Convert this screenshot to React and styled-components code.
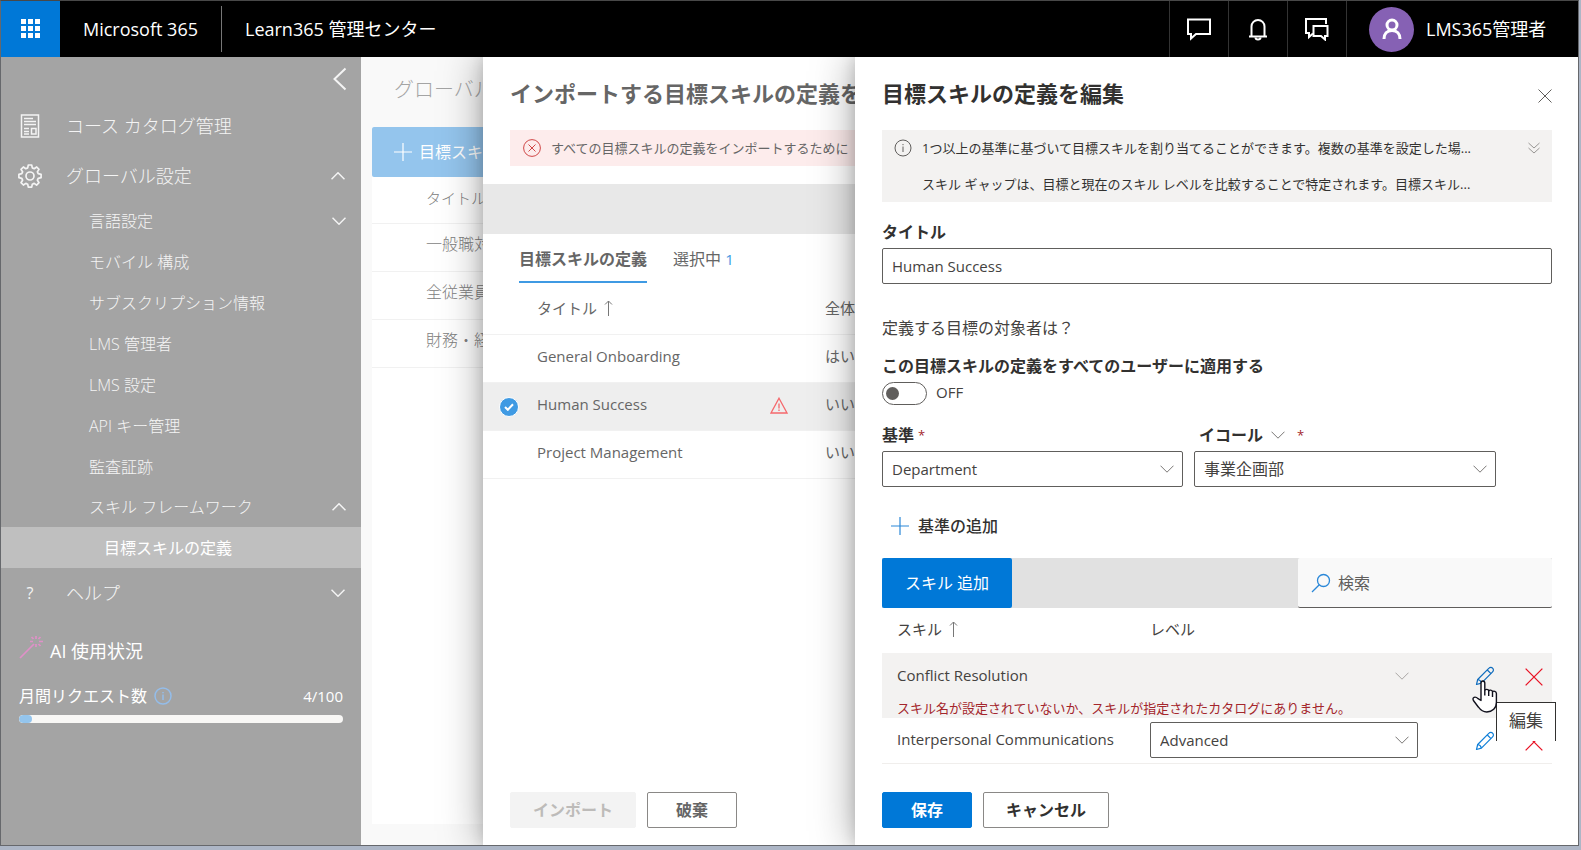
import React from "react";
import styled, { createGlobalStyle, css } from "styled-components";

const Global = createGlobalStyle`
  *, *::before, *::after { box-sizing: border-box; }
  html { background: #adb6c6; }
  body {
    margin: 0;
    font-family: "Open Sans", "Noto Sans CJK JP", sans-serif;
    font-size: 16px;
    font-weight: 400;
    line-height: 20px;
    color: #323130;
  }
  button, input, select { font: inherit; color: inherit; }
  h1, h2, p, ul { margin: 0; padding: 0; }
  ul { list-style: none; }
  table { border-collapse: collapse; border-spacing: 0; table-layout: fixed; width: 100%; }
  th, td { padding: 0; text-align: left; font-weight: inherit; }
`;

/* ---------- icons ---------- */

const Icon = ({ w = 18, h = w, box = `0 0 ${w} ${h}`, sw = 1, children, ...rest }) => (
  <svg width={w} height={h} viewBox={box} fill="none" stroke="currentColor" strokeWidth={sw} aria-hidden="true" {...rest}>
    {children}
  </svg>
);
const Waffle = () => (
  <Icon w={20} fill="#fff" stroke="none">
    {[0, 7, 14].map((y) => [0, 7, 14].map((x) => <rect key={`${x}-${y}`} x={x} y={y} width="5" height="5" />))}
  </Icon>
);
const Chat = () => (
  <Icon w={26} h={24} sw={2}>
    <path d="M2 2.500h22v14.500H10l-5 4.500v-4.500H2z" />
  </Icon>
);
const Bell = () => (
  <Icon w={20} h={24} sw={2}>
    <path d="M1 19.500h18M3.500 19V9.500a6.500 6.500 0 0 1 13 0V19" />
    <path d="M7.500 20.500a2.500 2 0 0 0 5 0" />
  </Icon>
);
const Chats = () => (
  <Icon w={26} h={24} sw={2}>
    <path d="M22 7V2H2v14h3v4l4-3.500" />
    <path d="M9.500 9h14v10h-2.500v3.500L17 19H9.500z" />
  </Icon>
);
const Person = () => (
  <Icon w={20} h={22} sw={3}>
    <circle cx="10" cy="7" r="5" />
    <path d="M2 21c0-5 3-8.500 8-8.500s8 3.500 8 8.500" />
  </Icon>
);
const Back = () => (
  <Icon w={14} h={24} sw={2}>
    <path d="M12.500 1.500L1.500 12l11 10.500" />
  </Icon>
);
const Catalog = () => (
  <Icon w={20} h={24} sw={1.5}>
    <rect x="1.500" y="1" width="17" height="22" />
    <path d="M4 4.500h9M4 7.500h12M4 10.500h12M4 14.500h5M4 17.500h5M4 20h5" />
    <rect x="11.500" y="14.500" width="4.500" height="5.500" />
  </Icon>
);
const Gear = () => (
  <Icon w={24} box="0 0 24 24" sw={1.7}>
    <circle cx="12" cy="12" r="4" />
    <path d="M10.300 1h3.400l.6 2.900 1.900.8L18.700 3 21 5.400l-1.600 2.400.8 1.900 2.900.6v3.400l-2.900.6-.8 1.900 1.600 2.500-2.400 2.400-2.400-1.700-1.900.8-.6 2.900h-3.400l-.6-2.900-1.900-.8L5.400 21 3 18.700l1.600-2.500-.8-1.900-2.900-.6v-3.400l2.900-.6.8-1.900L3 5.400 5.400 3l2.400 1.700 1.900-.8z" strokeLinejoin="round" />
  </Icon>
);
const Wand = () => (
  <Icon w={24} box="0 0 24 24" sw={1.7}>
    <path d="M1 23L15 9" />
    <path d="M17 1v3M17 9v3M11 6.500h3M20 6.500h4M12.500 2l2 2M21.500 2l-2 2M19.500 9l2 2" />
  </Icon>
);
const Info = ({ sw = 1 }) => (
  <Icon w={18} sw={sw}>
    <circle cx="9" cy="9" r="8" />
    <path d="M9 7.500v5.500M9 5v1.200" />
  </Icon>
);
const ErrorCircle = () => (
  <Icon w={18}>
    <circle cx="9" cy="9" r="8.400" />
    <path d="M5.500 5.500l7 7M12.500 5.500l-7 7" />
  </Icon>
);
const Chevron = ({ up, sw = 1 }) => (
  <Icon w={14} h={8} sw={sw}>
    <path d={up ? "M.5 7.300L7 .8l6.500 6.500" : "M.5.7L7 7.200 13.500.7"} />
  </Icon>
);
const DoubleChevron = () => (
  <Icon w={12} h={12}>
    <path d="M.5 1L6 6l5.500-5M.5 6L6 11l5.500-5" />
  </Icon>
);
const Cross = ({ size = 14, sw = 1 }) => (
  <Icon w={size} box="0 0 14 14" sw={sw}>
    <path d="M.5.5l13 13M13.500.5l-13 13" />
  </Icon>
);
const Plus = ({ size = 18 }) => (
  <Icon w={size} box="0 0 18 18" sw={1.2}>
    <path d="M9 0v18M0 9h18" />
  </Icon>
);
const Search = () => (
  <Icon w={20} sw={1.3}>
    <circle cx="12.500" cy="7.500" r="6" />
    <path d="M8.300 11.800L1 19" />
  </Icon>
);
const Pencil = () => (
  <Icon w={20} box="0 0 20 20" sw={1.2}>
    <path d="M1.500 18.500l1.200-5L14 2.200a2.400 2.400 0 0 1 3.600 0 2.400 2.400 0 0 1 0 3.600L6.400 17.100z" strokeLinejoin="round" />
    <path d="M2.700 13.500c2 .2 3.300 1.600 3.700 3.600M12.300 4l3.700 3.600" />
  </Icon>
);
const SortUp = () => (
  <Icon w={9} h={16}>
    <path d="M4.500 16V1M1 4.500L4.500 1 8 4.500" />
  </Icon>
);
const Warning = () => (
  <Icon w={18} h={17} sw={1.3}>
    <path d="M9 1.200L17 16H1z" />
    <path d="M9 6.500v5M9 12.500v1.500" />
  </Icon>
);
const Hand = () => (
  <svg width="26" height="34" viewBox="0 0 26 34" fill="#fff" stroke="#10101c" strokeWidth="1.400" strokeLinejoin="round" aria-hidden="true">
    <path d="M9 3.200C9 1.500 9.700 1 10.800 1s2 .7 2 2.200v7.300c.6-1.600 3.600-1.400 3.900.4.700-1.300 3.500-1 3.800.8 1-1 3.800-.6 3.900 1.800v8.700c0 6-4 9.800-9.600 9.800-4.200 0-6.200-1.900-8.300-4.800L1.600 20.800c-1-1.600-.7-3 .5-3.500 1.300-.5 2.600 0 4 1.400L9 20.500z" />
    <path d="M12.800 10.500v5M16.700 11v5M20.500 11.800V17" />
  </svg>
);

/* ---------- shell ---------- */

const Frame = styled.div`
  display: flex;
  flex-direction: column;
  min-height: calc(100vh - 4px);
  margin: 0 2px 4px 0;
  border: 1px solid #66686c;
  border-top-color: #484848;
  overflow: hidden;
`;
const TopBar = styled.header`
  display: flex;
  align-items: center;
  height: 56px;
  background: #000;
  color: #fff;
`;
const WaffleButton = styled.button`
  display: grid;
  place-items: center;
  width: 59px;
  height: 56px;
  padding: 0;
  border: 0;
  background: #0078d7;
`;
const Brand = styled.a`
  padding: 0 23px;
  color: inherit;
  font-size: 18px;
  line-height: 46px;
  text-decoration: none;
  white-space: nowrap;
  & + & { border-left: 1px solid #777; }
`;
const TopActions = styled.div`
  display: flex;
  align-items: stretch;
  height: 56px;
  margin-left: auto;
`;
const TopAction = styled.button`
  display: grid;
  place-items: center;
  width: 59px;
  padding: 0;
  border: 0;
  border-left: 1px solid #333;
  background: none;
`;
const Account = styled.button`
  display: flex;
  align-items: center;
  gap: 12px;
  width: 232px;
  padding: 0 0 0 22px;
  border: 0;
  border-left: 1px solid #333;
  background: none;
  font-size: 18px;
  white-space: nowrap;
`;
const Avatar = styled.span`
  display: grid;
  place-items: center;
  width: 45px;
  height: 45px;
  border-radius: 50%;
  background: #8661b4;
`;
const Body = styled.div`
  display: grid;
  grid-template-columns: 360px minmax(0, 1fr);
  flex: 1;
`;

/* ---------- sidebar ---------- */

const Sidebar = styled.nav`
  background: #a4a4a4;
  color: #f4f4f4;
  font-weight: 300;
`;
const Collapse = styled.button`
  display: block;
  height: 24px;
  margin: 10px 14px 10px auto;
  padding: 0;
  border: 0;
  background: none;
  svg { display: block; }
`;
const NavItem = styled.a`
  display: flex;
  align-items: center;
  height: 50px;
  padding: 0 16px 0 17px;
  color: inherit;
  font-size: 18px;
  text-decoration: none;
  > svg:last-child { margin-left: auto; }
`;
const NavIcon = styled.span`
  display: grid;
  place-items: center;
  width: 24px;
  margin-right: 24px;
  font-size: 16px;
  font-weight: 400;
`;
const SubItem = styled.a`
  display: flex;
  align-items: center;
  height: ${(p) => (p.$group ? 40 : 41)}px;
  padding: 0 15px 0 ${(p) => (p.$deep ? 103 : 88)}px;
  color: ${(p) => (p.$active ? "#fff" : "inherit")};
  background: ${(p) => (p.$active ? "#bfbfbf" : "none")};
  font-weight: ${(p) => (p.$active ? 400 : "inherit")};
  text-decoration: none;
  > svg { margin-left: auto; }
`;
const Usage = styled.section`
  padding: 13px 18px 0;
  color: #fff;
  font-weight: 400;
`;
const UsageTitle = styled.h2`
  display: flex;
  align-items: center;
  gap: 7px;
  height: 40px;
  font-size: 18px;
  font-weight: 400;
  svg { color: #e090c8; margin-bottom: 8px; }
`;
const UsageRow = styled.div`
  display: flex;
  align-items: center;
  gap: 7px;
  margin: 15px 0 9px;
  svg { color: #94bdea; }
  span:last-child { margin-left: auto; font-size: 15px; }
`;
const Meter = styled.div`
  height: 8px;
  border-radius: 4px;
  background: #f8f7f5;
  overflow: hidden;
`;
const MeterFill = styled.div`
  height: 100%;
  border-radius: 4px;
  background: #94c5ed;
`;

/* ---------- stage: base page with panels stacked over it ---------- */

const Stage = styled.main`
  display: grid;
  grid-template: minmax(0, 1fr) / minmax(0, 1fr);
  > * { grid-area: 1 / 1; min-width: 0; }
`;
const Page = styled.section`
  display: flex;
  flex-direction: column;
  padding: 18px 11px 21px;
  background: #f9f9f9;
  color: #808080;
  font-weight: 300;
`;
const PageTitle = styled.h1`
  padding-left: 22px;
  color: #a4a4a4;
  font-size: 20px;
  font-weight: 300;
  line-height: 30px;
`;
const PageCard = styled.div`
  flex: 1;
  margin-top: 22px;
  background: #fff;
`;
const PageAction = styled.button`
  display: flex;
  align-items: center;
  gap: 7px;
  width: 100%;
  height: 50px;
  padding: 0 22px;
  border: 0;
  border-radius: 2px 0 0 2px;
  background: #94c5ed;
  color: #fff;
  font-weight: 400;
`;
const PageTable = styled.table`
  th, td { height: 48px; padding: 0 0 6px 54px; border-bottom: 1px solid #f1f1f1; }
  th { height: 46px; padding-bottom: 4px; font-size: 15px; }
`;
const Panel = styled.section`
  display: flex;
  flex-direction: column;
  padding: 21px 26px 17px 27px;
  background: #fff;
  box-shadow: 0 0 40px rgba(0, 0, 0, 0.36), 0 0 14px rgba(0, 0, 0, 0.14);
  clip-path: inset(0 0 0 -80px);
  white-space: nowrap;
`;
const ImportPanel = styled(Panel)`
  margin-left: 122px;
  color: #666;
`;
const EditPanel = styled(Panel)`
  justify-self: end;
  width: 723px;
  max-width: 100%;
`;
const PanelHead = styled.div`
  display: flex;
  align-items: center;
  justify-content: space-between;
  height: 30px;
  margin-bottom: 22px;
  button { margin-top: 5px; }
`;
const PanelTitle = styled.h2`
  font-size: 22px;
  font-weight: 700;
  line-height: 30px;
`;
const IconButton = styled.button`
  display: inline-grid;
  place-items: center;
  padding: 0;
  border: 0;
  background: none;
  color: ${(p) => p.$color || "#605e5c"};
  vertical-align: middle;
`;
const Footer = styled.div`
  display: flex;
  gap: 11px;
  margin-top: auto;
  padding-top: 20px;
`;
const Button = styled.button`
  height: 36px;
  min-width: 90px;
  padding: 0 22px;
  border: 1px solid #8a8886;
  border-radius: 2px;
  background: #fff;
  font-weight: 700;
  ${(p) => p.$primary && css`
    border-color: #0078d7;
    background: #0078d7;
    color: #fff;
  `}
  &:disabled {
    border-color: #f3f3f3;
    background: #f3f3f3;
    color: #bdbbb9;
  }
`;

/* ---------- import panel ---------- */

const Alert = styled.div`
  display: flex;
  align-items: center;
  gap: 10px;
  height: 36px;
  padding: 0 13px;
  background: #fdecec;
  font-size: 13px;
  svg { color: #d04848; }
`;
const CommandStrip = styled.div`
  height: 50px;
  margin: 18px -26px 0 -27px;
  background: #e8e8e8;
`;
const Tabs = styled.div`
  display: flex;
  gap: 26px;
  padding-left: 9px;
`;
const Tab = styled.button`
  height: 49px;
  padding: 2px 0 0;
  border: 0;
  border-bottom: 2px solid ${(p) => (p.$active ? "#3f9ae3" : "transparent")};
  background: none;
  font-weight: ${(p) => (p.$active ? 700 : "inherit")};
  span { color: #3f9ae3; font-size: 15px; }
`;
const ImportTable = styled.table`
  width: auto;
  margin: 0 -26px 0 -27px;
  font-size: 15px;
  th, td { height: 48px; padding-bottom: 4px; }
  th { height: 51px; padding-bottom: 0; }
  tr { border-bottom: 1px solid #f1f1f1; }
  svg { vertical-align: middle; }
`;
const ImportRow = styled.tr`
  background: ${(p) => (p.$selected ? "#eee" : "none")};
`;
const RowCheck = styled.input`
  appearance: none;
  display: block;
  width: 20px;
  height: 20px;
  margin: 6px 0 0 16px;
  border: 1px solid #fff;
  border-radius: 50%;
  background: #3f9ae3;
`;
const CheckHolder = styled.label`
  display: grid;
  > * { grid-area: 1 / 1; }
  svg { margin: 12px 0 0 21px; color: #fff; z-index: 1; }
`;
const SortLabel = styled.span`
  display: inline-flex;
  align-items: center;
  gap: 7px;
  svg { color: #777; }
`;

/* ---------- edit panel ---------- */

const InfoBox = styled.div`
  display: grid;
  grid-template-columns: 40px minmax(0, 1fr) 36px;
  background: #f3f2f1;
  font-size: 13px;
  line-height: 36px;
  p { grid-column: 2; overflow: hidden; text-overflow: ellipsis; }
  > svg { margin: 9px 0 0 12px; color: #605e5c; }
`;
const Label = styled.label`
  display: block;
  font-weight: 700;
  line-height: 20px;
  margin-bottom: 6px;
`;
const field = css`
  width: 100%;
  height: 36px;
  padding: 0 9px;
  border: 1px solid #605e5c;
  border-radius: 2px;
  background: #fff;
  color: #444240;
  font-size: 15px;
`;
const TextInput = styled.input`
  ${field}
`;
const Field = styled.div`
  margin-top: 20px;
`;
const Question = styled.p`
  margin: 34px 0 18px;
  color: #444240;
`;
const ToggleRow = styled.label`
  display: flex;
  align-items: center;
  gap: 9px;
  height: 23px;
  color: #444240;
  font-size: 15px;
  line-height: 18px;
  span { margin-bottom: 4px; }
`;
const Toggle = styled.input`
  appearance: none;
  display: flex;
  align-items: center;
  width: 45px;
  height: 23px;
  margin: 0;
  padding: 0 3px;
  border: 1px solid #605e5c;
  border-radius: 12px;
  &::before {
    content: "";
    width: 13px;
    height: 13px;
    border-radius: 50%;
    background: #605e5c;
  }
`;
const Criteria = styled.div`
  display: grid;
  grid-template-columns: 301px 302px;
  gap: 11px;
  margin-top: 20px;
`;
const CriteriaHead = styled.div`
  display: flex;
  gap: 4px;
  padding-left: ${(p) => (p.$indent ? 5 : 0)}px;
`;
const Operator = styled.button`
  display: flex;
  align-items: center;
  gap: 8px;
  height: 20px;
  margin: 0 8px 6px 0;
  padding: 0;
  border: 0;
  background: none;
  font-weight: 700;
  svg { color: #7a7876; }
`;
const Required = styled.span`
  color: #a4262c;
  font-size: 13px;
`;
const SelectBox = styled.div`
  display: grid;
  align-items: center;
  width: ${(p) => (p.$wide ? "100%" : "268px")};
  > * { grid-area: 1 / 1; }
  select {
    ${field}
    appearance: none;
    font-size: ${(p) => (p.$cjk ? 16 : 15)}px;
    ${(p) => p.$quiet && css`border-color: transparent; background: none;`}
  }
  svg { justify-self: end; margin-right: 9px; color: ${(p) => (p.$quiet ? "#a8a6a4" : "#7a7876")}; pointer-events: none; }
`;
const AddCriterion = styled.button`
  display: flex;
  align-items: center;
  align-self: flex-start;
  gap: 9px;
  height: 36px;
  margin: 21px 0 14px;
  padding: 0 9px;
  border: 0;
  background: none;
  font-weight: 500;
  svg { color: #2b88d8; }
`;
const SkillBar = styled.div`
  display: grid;
  grid-template-columns: 130px minmax(0, 1fr) 254px;
  height: 50px;
  background: #e1e1e1;
`;
const AddSkill = styled.button`
  border: 0;
  border-radius: 2px;
  background: #0078d7;
  color: #fff;
  font-weight: 400;
`;
const SearchBox = styled.label`
  display: flex;
  grid-column: 3;
  align-items: center;
  gap: 7px;
  padding: 0 13px;
  border-bottom: 1px solid #605e5c;
  border-radius: 2px;
  background: #f9f9f9;
  svg { flex: none; color: #2b88d8; }
  input { width: 100%; border: 0; padding: 0; background: none; outline: 0; }
  input::placeholder { color: #605e5c; opacity: 1; }
`;
const SkillTable = styled.table`
  color: #444240;
  th, td { height: 45px; }
  th { padding-bottom: 4px; font-size: 15px; }
  th:first-child, td:first-child { padding-left: 15px; }
  th:nth-child(3), td:nth-child(3), th:nth-child(4), td:nth-child(4) { text-align: center; }
  td:first-child { padding-bottom: 2px; font-size: 15px; }
`;
const SkillRow = styled.tr`
  background: ${(p) => (p.$invalid ? "#f3f2f1" : "none")};
  border-bottom: ${(p) => (p.$invalid ? "0" : "1px solid #f0eeec")};
`;
const SkillError = styled.tr`
  background: #f3f2f1;
  && td { height: 20px; padding-bottom: 0; color: #a4262c; font-size: 13px; line-height: 18px; }
`;
const EditAction = styled.span`
  position: relative;
  display: inline-block;
`;
const Pointer = styled.span`
  position: absolute;
  top: 15px;
  left: -3px;
  z-index: 2;
`;
const Tooltip = styled.span`
  position: absolute;
  top: 37px;
  left: 21px;
  z-index: 1;
  width: 60px;
  height: 39px;
  border: 1px solid #323130;
  border-bottom: 0;
  background: #fff;
  color: #444240;
  font-size: 17px;
  line-height: 36px;
  text-align: center;
`;

const subItems = [
  { text: "言語設定", chevron: "down" },
  { text: "モバイル 構成" },
  { text: "サブスクリプション情報" },
  { text: "LMS 管理者" },
  { text: "LMS 設定" },
  { text: "API キー管理" },
  { text: "監査証跡" },
  { text: "スキル フレームワーク", chevron: "up" },
  { text: "目標スキルの定義", deep: true, active: true },
];
const imports = [
  { name: "General Onboarding", all: "はい" },
  { name: "Human Success", all: "いいえ", selected: true },
  { name: "Project Management", all: "いいえ" },
];
const usage = { used: 4, total: 100 };

function SideNav() {
  return (
    <Sidebar>
      <Collapse aria-label="折りたたむ"><Back /></Collapse>
      <NavItem href="#catalog"><NavIcon><Catalog /></NavIcon>コース カタログ管理</NavItem>
      <NavItem href="#global"><NavIcon><Gear /></NavIcon>グローバル設定<Chevron up sw={1.5} /></NavItem>
      <ul>
        {subItems.map((s) => (
          <li key={s.text}>
            <SubItem href="#sub" $deep={s.deep} $active={s.active} $group={Boolean(s.chevron)}>
              {s.text}
              {s.chevron && <Chevron up={s.chevron === "up"} sw={1.5} />}
            </SubItem>
          </li>
        ))}
      </ul>
      <NavItem href="#help"><NavIcon>?</NavIcon>ヘルプ<Chevron sw={1.5} /></NavItem>
      <Usage>
        <UsageTitle><Wand />AI 使用状況</UsageTitle>
        <UsageRow><span>月間リクエスト数</span><Info sw={1.5} /><span>{usage.used}/{usage.total}</span></UsageRow>
        <Meter><MeterFill style={{ width: `${(usage.used / usage.total) * 100}%` }} /></Meter>
      </Usage>
    </Sidebar>
  );
}

function Import() {
  return (
    <ImportPanel>
      <PanelHead><PanelTitle>インポートする目標スキルの定義を</PanelTitle></PanelHead>
      <Alert><ErrorCircle />すべての目標スキルの定義をインポートするために</Alert>
      <CommandStrip />
      <Tabs>
        <Tab $active>目標スキルの定義</Tab>
        <Tab>選択中 <span>1</span></Tab>
      </Tabs>
      <ImportTable>
        <colgroup><col width="54" /><col width="233" /><col width="55" /><col /></colgroup>
        <thead>
          <tr><th /><th><SortLabel>タイトル<SortUp /></SortLabel></th><th /><th>全体</th></tr>
        </thead>
        <tbody>
          {imports.map((r) => (
            <ImportRow key={r.name} $selected={r.selected}>
              <td>
                {r.selected && (
                  <CheckHolder>
                    <RowCheck type="checkbox" defaultChecked aria-label={r.name} />
                    <Icon w={10} h={8} sw={2}><path d="M1 4l2.800 2.800L9 1.200" /></Icon>
                  </CheckHolder>
                )}
              </td>
              <td>{r.name}</td>
              <td>{r.selected && <IconButton as="span" $color="#f5686c"><Warning /></IconButton>}</td>
              <td>{r.all}</td>
            </ImportRow>
          ))}
        </tbody>
      </ImportTable>
      <Footer>
        <Button disabled>インポート</Button>
        <Button>破棄</Button>
      </Footer>
    </ImportPanel>
  );
}

function Edit() {
  return (
    <EditPanel>
      <PanelHead>
        <PanelTitle>目標スキルの定義を編集</PanelTitle>
        <IconButton aria-label="閉じる"><Cross /></IconButton>
      </PanelHead>
      <InfoBox>
        <Info />
        <p>1つ以上の基準に基づいて目標スキルを割り当てることができます。複数の基準を設定した場...</p>
        <IconButton $color="#979593" aria-label="展開"><DoubleChevron /></IconButton>
        <p>スキル ギャップは、目標と現在のスキル レベルを比較することで特定されます。目標スキル...</p>
      </InfoBox>
      <Field>
        <Label htmlFor="title">タイトル</Label>
        <TextInput id="title" defaultValue="Human Success" />
      </Field>
      <Question>定義する目標の対象者は？</Question>
      <Label htmlFor="all-users">この目標スキルの定義をすべてのユーザーに適用する</Label>
      <ToggleRow><Toggle id="all-users" type="checkbox" role="switch" /><span>OFF</span></ToggleRow>
      <Criteria>
        <div>
          <CriteriaHead><Label htmlFor="criterion">基準</Label><Required>*</Required></CriteriaHead>
          <SelectBox $wide>
            <select id="criterion"><option>Department</option></select>
            <Chevron />
          </SelectBox>
        </div>
        <div>
          <CriteriaHead $indent><Operator>イコール<Chevron /></Operator><Required>*</Required></CriteriaHead>
          <SelectBox $wide $cjk>
            <select aria-label="イコール"><option>事業企画部</option></select>
            <Chevron />
          </SelectBox>
        </div>
      </Criteria>
      <AddCriterion><Plus />基準の追加</AddCriterion>
      <SkillBar>
        <AddSkill>スキル 追加</AddSkill>
        <SearchBox><Search /><input type="search" placeholder="検索" aria-label="検索" /></SearchBox>
      </SkillBar>
      <SkillTable>
        <colgroup><col width="268" /><col /><col width="62" /><col width="36" /></colgroup>
        <thead>
          <tr><th><SortLabel>スキル<SortUp /></SortLabel></th><th>レベル</th><th /><th /></tr>
        </thead>
        <tbody>
          <SkillRow $invalid>
            <td>Conflict Resolution</td>
            <td>
              <SelectBox $quiet>
                <select aria-label="レベル" disabled><option></option></select>
                <Chevron />
              </SelectBox>
            </td>
            <td>
              <EditAction>
                <IconButton $color="#0f6cbd" aria-label="編集"><Pencil /></IconButton>
                <Pointer><Hand /></Pointer>
                <Tooltip role="tooltip">編集</Tooltip>
              </EditAction>
            </td>
            <td><IconButton $color="#e81123" aria-label="削除"><Cross size={18} /></IconButton></td>
          </SkillRow>
          <SkillError>
            <td colSpan={4}>スキル名が設定されていないか、スキルが指定されたカタログにありません。</td>
          </SkillError>
          <SkillRow>
            <td>Interpersonal Communications</td>
            <td>
              <SelectBox>
                <select aria-label="レベル"><option>Advanced</option></select>
                <Chevron />
              </SelectBox>
            </td>
            <td><IconButton $color="#0f7fd8" aria-label="編集"><Pencil /></IconButton></td>
            <td><IconButton $color="#e81123" aria-label="削除"><Cross size={18} /></IconButton></td>
          </SkillRow>
        </tbody>
      </SkillTable>
      <Footer>
        <Button $primary>保存</Button>
        <Button>キャンセル</Button>
      </Footer>
    </EditPanel>
  );
}

export default function App() {
  return (
    <>
      <Global />
      <Frame>
        <TopBar>
          <WaffleButton aria-label="アプリ起動ツール"><Waffle /></WaffleButton>
          <Brand href="#home">Microsoft 365</Brand>
          <Brand href="#admin">Learn365 管理センター</Brand>
          <TopActions>
            <TopAction aria-label="チャット"><Chat /></TopAction>
            <TopAction aria-label="通知"><Bell /></TopAction>
            <TopAction aria-label="フィードバック"><Chats /></TopAction>
            <Account><Avatar><Person /></Avatar>LMS365管理者</Account>
          </TopActions>
        </TopBar>
        <Body>
          <SideNav />
          <Stage>
            <Page>
              <PageTitle>グローバル</PageTitle>
              <PageCard>
                <PageAction><Plus />目標スキル</PageAction>
                <PageTable>
                  <thead><tr><th>タイトル</th></tr></thead>
                  <tbody>
                    <tr><td>一般職対</td></tr>
                    <tr><td>全従業員</td></tr>
                    <tr><td>財務・経</td></tr>
                  </tbody>
                </PageTable>
              </PageCard>
            </Page>
            <Import />
            <Edit />
          </Stage>
        </Body>
      </Frame>
    </>
  );
}
